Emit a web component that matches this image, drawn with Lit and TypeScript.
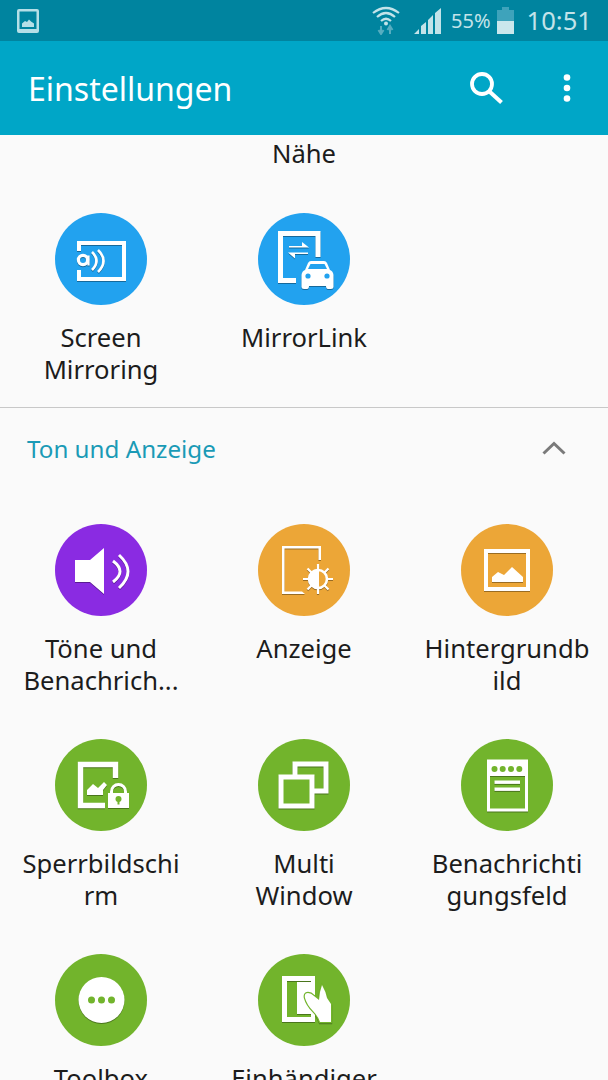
import { LitElement, html, css, svg } from 'lit';
import { customElement } from 'lit/decorators.js';

const BLUE = '#22a2ef';
const ORANGE = '#eca637';
const GREEN = '#72b42c';
const PURPLE = '#8a2be2';

const icons: Record<string, any> = {
    mirror: svg`
        <path d="M24 38V30H69V66H24V57" fill="none" stroke="#fff" stroke-width="4"/>
        <circle cx="28" cy="47" r="4.6" fill="none" stroke="#fff" stroke-width="3.2"/>
        <path d="M33.5 42.5V52.5" stroke="#fff" stroke-width="2.2"/>
        <path d="M37 39Q46 48 37 57" fill="none" stroke="#fff" stroke-width="2.6"/>
        <path d="M43 37Q54 48 43 59" fill="none" stroke="#fff" stroke-width="2.6"/>`,
    mirrorlink: svg`
        <path d="M60 44V20.5H22.5V67.5H38" fill="none" stroke="#fff" stroke-width="5"/>
        <path d="M31 33H44V29L51 34.5H31ZM50 41H37V45.5L30 39.5H50Z" fill="#fff"/>
        <path d="M43.5 74V62Q44 58 47 57L50 50Q51 48 53 48H66Q68 48 69 50L72 57Q75 58 75.5 62V74Q75.5 76 73 76H70Q68 76 68 73H51Q51 76 49 76H46Q43.5 76 43.5 74Z" fill="#fff"/>
        <circle cx="50" cy="63" r="2.6" fill="${BLUE}"/>
        <circle cx="69" cy="63" r="2.6" fill="${BLUE}"/>
        <path d="M50 56L52.5 51H66.5L69 56Z" fill="${BLUE}"/>`,
    sound: svg`
        <path d="M20 36H35L49 24V70L35 58H20Z" fill="#fff"/>
        <path d="M58 37Q72 47.5 58 58" fill="none" stroke="#fff" stroke-width="3"/>
        <path d="M64 31Q82 47.5 64 64" fill="none" stroke="#fff" stroke-width="3"/>`,
    display: svg`
        <path d="M60.5 36V24.5H26.5V67.5H44L47 70H24V22H63V36Z" fill="#fff"/>
        <path d="M60 40V70M45 55H75M49.5 44.5L70.5 65.5M70.5 44.5L49.5 65.5" stroke="#fff" stroke-width="2.2"/>
        <circle cx="60" cy="55" r="9" fill="${ORANGE}" stroke="#fff" stroke-width="2.6"/>
        <path d="M61 45A10 10 0 0 0 61 65Z" fill="#fff"/>`,
    wallpaper: svg`
        <rect x="25" y="27" width="42" height="38" fill="none" stroke="#fff" stroke-width="4"/>
        <path d="M31 58V53L37 48L43 51L51 43L62 53V58Z" fill="#fff"/>`,
    lockscreen: svg`
        <path d="M60.5 39V25.5H25.5V66.5H50" fill="none" stroke="#fff" stroke-width="5.4"/>
        <path d="M32 56V51L38 45L43 49L49 43L52 46L48 51V56Z" fill="#fff"/>
        <path d="M56.5 55V52.5A7 7 0 0 1 70.5 52.5V55" fill="none" stroke="#fff" stroke-width="3"/>
        <rect x="53" y="54" width="21" height="15" fill="#fff"/>
        <circle cx="63.5" cy="60" r="3" fill="${GREEN}"/>
        <rect x="62.5" y="60" width="2" height="5.5" fill="${GREEN}"/>`,
    multi: svg`
        <rect x="37" y="25" width="31" height="27" fill="none" stroke="#fff" stroke-width="5"/>
        <rect x="23" y="38" width="31" height="29" fill="${GREEN}" stroke="#fff" stroke-width="5"/>`,
    panel: svg`
        <rect x="27.5" y="22" width="38" height="49" fill="none" stroke="#fff" stroke-width="3"/>
        <rect x="27.5" y="22" width="38" height="15" fill="#fff"/>
        <g fill="${GREEN}">
            <circle cx="33.5" cy="30" r="3"/><circle cx="41.7" cy="30" r="3"/>
            <circle cx="50" cy="30" r="3"/><circle cx="58.3" cy="30" r="3"/>
        </g>
        <rect x="33.5" y="41.5" width="25.5" height="3.4" fill="#fff"/>
        <rect x="33.5" y="48.5" width="25.5" height="3.4" fill="#fff"/>`,
    toolbox: svg`
        <circle cx="46.5" cy="46" r="23" fill="#fff"/>
        <g fill="${GREEN}">
            <circle cx="36.5" cy="46" r="3.5"/><circle cx="46.5" cy="46" r="3.5"/><circle cx="56.5" cy="46" r="3.5"/>
        </g>`,
    onehand: svg`
        <path d="M24 22H57V68H24Z M29 27V63H53V27Z" fill="#fff" fill-rule="evenodd"/>
        <rect x="39" y="28" width="14" height="32" fill="#fff"/>
        <path d="M47 44Q46 39 50 39Q53 39 56 42L61 46L62 38L64 31Q68 38 69 44L73 50V68H62Q60 62 55 57Q49 51 47 44Z" fill="#fff" stroke="${GREEN}" stroke-width="2.4" paint-order="stroke"/>`,
};

type Item = { icon: string; color: string; lines: string[] };

const first: Item[] = [
    { icon: 'mirror', color: BLUE, lines: ['Screen', 'Mirroring'] },
    { icon: 'mirrorlink', color: BLUE, lines: ['MirrorLink'] },
];

const sound: Item[] = [
    { icon: 'sound', color: PURPLE, lines: ['Töne und', 'Benachrich...'] },
    { icon: 'display', color: ORANGE, lines: ['Anzeige'] },
    { icon: 'wallpaper', color: ORANGE, lines: ['Hintergrundb', 'ild'] },
    { icon: 'lockscreen', color: GREEN, lines: ['Sperrbildschi', 'rm'] },
    { icon: 'multi', color: GREEN, lines: ['Multi', 'Window'] },
    { icon: 'panel', color: GREEN, lines: ['Benachrichti', 'gungsfeld'] },
    { icon: 'toolbox', color: GREEN, lines: ['Toolbox'] },
    { icon: 'onehand', color: GREEN, lines: ['Einhändiger', 'Betrieb'] },
];

@customElement('app-root')
export class AppRoot extends LitElement {
    static styles = css`
        :host {
            display: flex;
            flex-direction: column;
            width: 608px;
            height: 1080px;
            overflow: hidden;
            background: #fafafa;
            font-family: "Noto Sans", sans-serif;
            color: #1c1c1c;
        }
        .status {
            flex: none;
            height: 41px;
            box-sizing: border-box;
            padding: 0 16px 0 17px;
            display: flex;
            align-items: center;
            background: #00849f;
            color: #c3e3e9;
        }
        .status .thumb { margin-right: auto; }
        .status .wifi { margin-right: 14px; }
        .status .signal { margin-right: 10px; }
        .status .pct { font-size: 20px; line-height: 41px; margin-right: 6px; }
        .status .batt { margin-right: 13px; }
        .status .time { font-size: 25.6px; line-height: 41px; }
        .bar {
            flex: none;
            height: 94px;
            box-sizing: border-box;
            padding: 0 37px 0 28px;
            display: flex;
            align-items: center;
            background: #00a6c7;
            color: #fff;
        }
        .bar h1 {
            flex: 1;
            margin: 0;
            font-size: 32px;
            font-weight: 400;
        }
        .bar .search { margin-right: 60px; }
        .near {
            flex: none;
            margin-top: 3px;
            height: 32px;
            line-height: 32px;
            text-align: center;
            font-size: 25.6px;
        }
        .grid {
            flex: none;
            display: grid;
            grid-template-columns: repeat(3, 203px);
            justify-content: center;
            row-gap: 42px;
        }
        .grid.top {
            margin-top: 43px;
            padding-bottom: 21px;
            border-bottom: 1px solid #c8c8c8;
        }
        .grid.sound { margin-top: 34px; }
        .item {
            display: flex;
            flex-direction: column;
            align-items: center;
            height: 173px;
        }
        .disc {
            width: 92px;
            height: 92px;
            border-radius: 50%;
            margin-bottom: 17px;
        }
        .disc svg {
            display: block;
            filter: drop-shadow(0 1px 0 rgba(0, 0, 0, .35));
        }
        .label {
            font-size: 25.6px;
            line-height: 32px;
            white-space: nowrap;
            text-align: center;
        }
        .head {
            flex: none;
            height: 82px;
            box-sizing: border-box;
            padding: 0 42px 2px 27px;
            display: flex;
            align-items: center;
            justify-content: space-between;
            color: #1a9ab6;
            font-size: 24.2px;
        }
    `;

    renderItem(it: Item) {
        return html`
            <div class="item">
                <div class="disc" style="background:${it.color}">
                    <svg width="92" height="92" viewBox="0 0 92 92">${icons[it.icon]}</svg>
                </div>
                <div class="label">${it.lines.map((l) => html`<div>${l}</div>`)}</div>
            </div>
        `;
    }

    render() {
        return html`
            <div class="status">
                <svg class="thumb" width="22" height="24" viewBox="0 0 22 24">
                    <path d="M2 0H20Q22 0 22 2V22Q22 24 20 24H2Q0 24 0 22V2Q0 0 2 0ZM2.5 2.5V20H19.5V2.5Z" fill="#b5dfe7" fill-rule="evenodd"/>
                    <path d="M5 18V14.5L8 12L10 13L12 10.5L14 12.5L17 14.5V18Z" fill="#b5dfe7"/>
                </svg>
                <svg class="wifi" width="28" height="29" viewBox="0 0 28 29">
                    <g fill="none" stroke="#c3e3e9" stroke-width="2.2">
                        <path d="M1 7Q14 -3 27 7"/>
                        <path d="M5 11Q14 3 23 11"/>
                        <path d="M9 15Q14 10.5 19 15"/>
                    </g>
                    <circle cx="14" cy="17.5" r="2" fill="#c3e3e9"/>
                    <path d="M9 20V26M6.5 24L9 28L11.5 24" fill="none" stroke="#56adc0" stroke-width="2"/>
                    <path d="M18 28V22M15.5 24L18 20L20.5 24" fill="none" stroke="#56adc0" stroke-width="2"/>
                </svg>
                <svg class="signal" width="27" height="26" viewBox="0 0 27 26">
                    <path d="M0 26L5 21V26ZM7 26V18L12 14V26ZM14 26V12L19 7V26ZM21 26V5L27 0V26Z" fill="#c3e3e9"/>
                </svg>
                <span class="pct">55%</span>
                <svg class="batt" width="17" height="27" viewBox="0 0 17 27">
                    <rect x="5" y="0" width="7" height="3" fill="#3ea3bb"/>
                    <rect x="0" y="3" width="17" height="11" fill="#3ea3bb"/>
                    <rect x="0" y="14" width="17" height="13" fill="#cbe7ec"/>
                </svg>
                <span class="time">10:51</span>
            </div>
            <div class="bar">
                <h1>Einstellungen</h1>
                <svg class="search" width="33" height="32" viewBox="0 0 33 32">
                    <circle cx="12" cy="12" r="10" fill="none" stroke="#fff" stroke-width="3.8"/>
                    <path d="M20 20L31.5 30.5" stroke="#fff" stroke-width="4"/>
                </svg>
                <svg width="8" height="28" viewBox="0 0 8 28">
                    <circle cx="4" cy="3.5" r="3.3" fill="#fff"/>
                    <circle cx="4" cy="14" r="3.3" fill="#fff"/>
                    <circle cx="4" cy="24.5" r="3.3" fill="#fff"/>
                </svg>
            </div>
            <div class="near">Nähe</div>
            <div class="grid top">${first.map((it) => this.renderItem(it))}</div>
            <div class="head">
                <span>Ton und Anzeige</span>
                <svg width="24" height="14" viewBox="0 0 24 14">
                    <path d="M1.5 12.5L12 2.5L22.5 12.5" fill="none" stroke="#7a7a7a" stroke-width="3"/>
                </svg>
            </div>
            <div class="grid sound">${sound.map((it) => this.renderItem(it))}</div>
        `;
    }
}
